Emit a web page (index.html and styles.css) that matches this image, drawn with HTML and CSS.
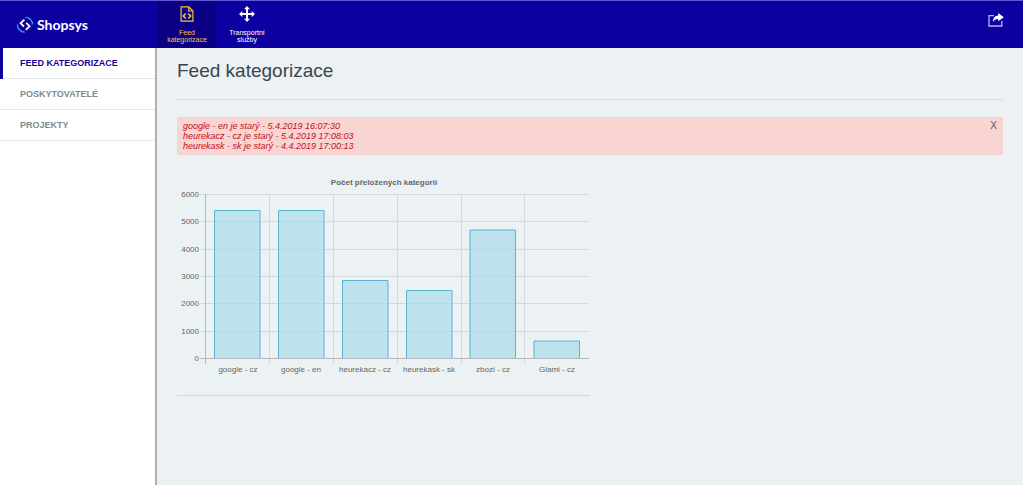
FILE: index.html
```html
<!DOCTYPE html>
<html lang="cs">
<head>
<meta charset="utf-8">
<title>Feed kategorizace</title>
<link rel="stylesheet" href="styles.css">
</head>
<body>
<header class="header">
  <a class="logo" href="#">
    <svg class="logo-mark" viewBox="0 0 18 18" fill="none" stroke-width="1.5" aria-hidden="true">
      <path d="M9.500 1.200A7.600 7.600 0 0 1 16.600 8.500M1.400 8.500A7.600 7.600 0 0 0 8.600 16.300" stroke="#3a8df5"/>
      <path d="M8.400 3.700L4.600 7.300L8 10.500M10.200 6.900L13.600 10.200L9.800 13.900" stroke="#fff" stroke-width="1.800"/>
    </svg>
    <span>Shopsys</span>
  </a>
  <nav class="topnav">
    <a class="topnav-item topnav-item-active" href="#">
      <svg viewBox="0 0 16 16" fill="none" stroke="currentColor" stroke-width="1.2" aria-hidden="true">
        <path d="M2.1 .9H9.8L13.9 5V15.1H2.1ZM9.8 .9V5H13.9"/>
        <path d="M6.7 7.600L4.300 10L6.700 12.400M9.300 7.600L11.700 10L9.300 12.400" stroke-width="1.5"/>
      </svg>
      <span>Feed kategorizace</span>
    </a>
    <a class="topnav-item" href="#">
      <svg viewBox="0 0 16 16" fill="currentColor" aria-hidden="true">
        <path d="M8 0L11 3.3H9V7H12.7V5L16 8L12.7 11V9H9V12.7H11L8 16L5 12.7H7V9H3.3V11L0 8L3.3 5V7H7V3.3H5Z"/>
      </svg>
      <span>Transportní služby</span>
    </a>
  </nav>
  <a class="share" href="#" aria-label="Sdílet">
    <svg viewBox="0 0 16 14" aria-hidden="true">
      <path d="M6 2.6H1V13H13.8V8" fill="none" stroke="#b9b3ee" stroke-width="1.3"/>
      <path d="M10.2 0L15.8 4.2L10.2 8.3V6C7.8 5.9 6.2 6.8 5 9C5 5 6.700 2.700 10.2 2.400Z" fill="#fff"/>
    </svg>
  </a>
</header>
<div class="body">
  <nav class="sidebar">
    <a class="side-item side-item-active" href="#">FEED KATEGORIZACE</a>
    <a class="side-item" href="#">POSKYTOVATELÉ</a>
    <a class="side-item" href="#">PROJEKTY</a>
  </nav>
  <main class="content">
    <h1 class="title">Feed kategorizace</h1>
    <div class="alert" role="alert">
      <div class="alert-text">
        <div>google - en je starý - 5.4.2019 16:07:30</div>
        <div>heurekacz - cz je starý - 5.4.2019 17:08:03</div>
        <div>heurekask - sk je starý - 4.4.2019 17:00:13</div>
      </div>
      <button class="alert-close" type="button">X</button>
    </div>
    <section class="chart-box">
      <svg class="chart" viewBox="0 0 413 210" role="img" aria-label="Počet přeložených kategorií">
        <text class="chart-title" x="207" y="15">Počet přeložených kategorií</text>
        <path class="grid" d="M23 24.500H412M23 51.500H412M23 79.500H412M23 106.500H412M23 133.500H412M23 161.500H412M92.500 24V194M156.500 24V194M220.500 24V194M284.500 24V194M347.500 24V194"/>
        <g class="bar">
          <path d="M37.500 188V40.500H83V188"/>
          <path d="M101.500 188V40.500H147V188"/>
          <path d="M165.500 188V110.500H211V188"/>
          <path d="M229.500 188V120.500H275V188"/>
          <path d="M293 188V60H338.500V188"/>
          <path d="M357 188V171H402.500V188"/>
        </g>
        <path class="axis" d="M23 188.500H412M28.500 24V194"/>
        <g class="tick-y">
          <text x="22" y="27">6000</text>
          <text x="22" y="54">5000</text>
          <text x="22" y="82">4000</text>
          <text x="22" y="109">3000</text>
          <text x="22" y="136">2000</text>
          <text x="22" y="164">1000</text>
          <text x="22" y="191">0</text>
        </g>
        <g class="tick-x">
          <text x="61" y="202">google - cz</text>
          <text x="124" y="202">google - en</text>
          <text x="188" y="202">heurekacz - cz</text>
          <text x="252" y="202">heurekask - sk</text>
          <text x="316" y="202">zbozi - cz</text>
          <text x="380" y="202">Glami - cz</text>
        </g>
      </svg>
    </section>
  </main>
</div>
</body>
</html>
```
FILE: styles.css
```css
* { box-sizing: border-box; }

body {
  margin: 0;
  min-height: 100vh;
  display: flex;
  flex-direction: column;
  background: #ecf1f4;
  color: #36474f;
  font-family: "Liberation Sans", Arial, sans-serif;
  font-size: 9px;
}

a { color: inherit; text-decoration: none; }

.header {
  display: flex;
  height: 48px;
  background: #0c00a0;
  border-top: 1px solid #5f58d0;
  color: #fff;
}

.logo {
  display: flex;
  align-items: center;
  gap: 3px;
  width: 158px;
  padding-left: 16px;
  font-family: Lato, sans-serif;
  font-size: 14px;
  font-weight: 700;
}
.logo-mark { width: 18px; height: 18px; }

.topnav { display: flex; gap: 2px; }
.topnav-item {
  display: flex;
  flex-direction: column;
  align-items: center;
  gap: 7px;
  width: 58px;
  padding: 5px 4px 0;
  font-size: 7px;
  line-height: 7px;
  text-align: center;
}
.topnav-item svg { width: 16px; height: 16px; }
.topnav-item-active { background: #0b0083; color: #f2c24a; }

.share { margin-left: auto; padding: 12px 19px 0 0; }
.share svg { display: block; width: 16px; height: 14px; }

.body { display: flex; flex: 1; }

.sidebar {
  flex: none;
  width: 157px;
  background: #fff;
  border-right: 2px solid #a9b1b5;
}
.side-item {
  display: block;
  padding: 0 20px;
  box-shadow: inset 0 -1px #e1e6e8;
  font-weight: bold;
  line-height: 31px;
  color: #7f8a90;
}
.side-item-active {
  box-shadow: inset 3px 0 #0c00a0, inset 0 -1px #e1e6e8;
  color: #17009a;
}

.content { flex: 1; padding: 0 20px; }

.title {
  margin: 0 0 17px;
  padding: 12px 0 17px;
  border-bottom: 1px solid #d6dbde;
  font-size: 19px;
  font-weight: normal;
  line-height: 22px;
}

.alert {
  display: flex;
  justify-content: space-between;
  align-items: flex-start;
  padding: 4px 6px;
  background: #f8d4d3;
  color: #c4101c;
  font-style: italic;
  line-height: 10px;
}
.alert-close {
  padding: 0;
  border: 0;
  background: none;
  color: #565c68;
  font: 10px/10px "Liberation Sans", Arial, sans-serif;
}

.chart-box {
  width: 50%;
  margin-top: 15px;
  padding-bottom: 15px;
  border-bottom: 1px solid #d2d7da;
}
.chart { display: block; width: 100%; font-size: 8px; fill: #666; }
.chart-title { font-weight: bold; text-anchor: middle; }
.grid { fill: none; stroke: #d4d9dc; }
.axis { fill: none; stroke: #b3b8bb; }
.bar { fill: #9ed9e9; fill-opacity: .6; stroke: #57b5d2; }
.tick-y { text-anchor: end; }
.tick-x { text-anchor: middle; }
```
